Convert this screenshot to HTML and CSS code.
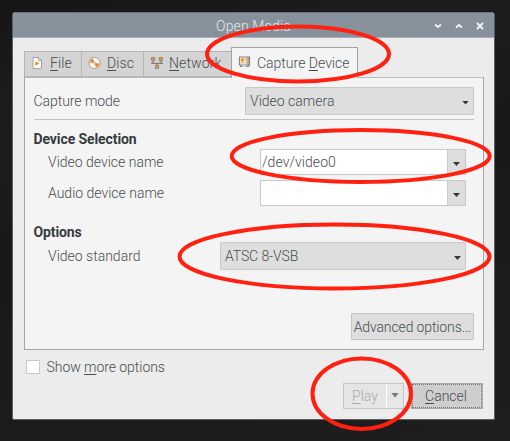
FILE: index.html
```html
<!DOCTYPE html>
<html lang="en">
<head>
<meta charset="utf-8">
<title>Open Media</title>
<link rel="stylesheet" href="styles.css">
</head>
<body>
<main class="window">
  <header class="titlebar">
    <span class="title">Open Media</span>
    <div class="controls">
      <svg width="8" height="8" viewBox="0 0 8 8"><path d="M1 2.500 4 5 7 2.500"/></svg>
      <svg width="8" height="8" viewBox="0 0 8 8"><path d="M1 5.500 4 3 7 5.500"/></svg>
      <svg width="8" height="8" viewBox="0 0 8 8"><path d="M1 1 7 7M7 1 1 7"/></svg>
    </div>
  </header>
  <nav class="tabs">
    <div class="tab tab-file">
      <svg width="14" height="14" viewBox="0 0 14 14"><path d="M2 1.500h5.500l3 3v8H2z" fill="#fafafa" stroke="#a4a4a4"/><path d="M7.500 1.500v3h3" fill="none" stroke="#a4a4a4"/><path d="M4.300 5.200v4.600l4-2.300z" fill="#f58a12"/></svg>
      <span><u>F</u>ile</span>
    </div>
    <div class="tab tab-disc">
      <svg width="14" height="14" viewBox="0 0 14 14"><circle cx="6.500" cy="7" r="5.600" fill="#f8f8f8" stroke="#a0a0a0"/><path d="M6.500 7 1.800 6.500 2.500 4 5 2.400zM6.500 7l4.700.5-.7 2.700L8 11.600z" fill="#f58a12"/><circle cx="6.500" cy="7" r="1.300" fill="#eee" stroke="#aaa" stroke-width=".8"/></svg>
      <span><u>D</u>isc</span>
    </div>
    <div class="tab tab-network">
      <svg width="14" height="14" viewBox="0 0 14 14"><path d="M3 4v3M11 4v3M1 7.300h12M7 7v3" fill="none" stroke="#808080" stroke-width="1.200"/><g fill="#f99a16" stroke="#858585" stroke-width=".9"><path d="M1.500 1.500h3.200v3.200H1.500zM9.300 1.500h3.200v3.200H9.300zM5.400 9.300h3.200v3.200H5.400z"/></g></svg>
      <span><u>N</u>etwork</span>
    </div>
    <div class="tab tab-capture active">
      <svg width="14" height="14" viewBox="0 0 14 14"><path d="M1.500 2h8.500v8H1.500zM10 3h1.500V1.200M11.500 3v7H10M2.500 10v1.500h2.200M7.500 11.500h3V10" fill="#f2eee8" stroke="#858585" stroke-width="1.200"/><circle cx="4.500" cy="5" r="1.700" fill="#f58a12"/><path d="M7 3.500h2v2H7zM6.500 7h2.500v1.300H6.500zM3 7.500h2.500v1H3z" fill="#f9b24e"/></svg>
      <span>Capture <u>D</u>evice</span>
    </div>
  </nav>
  <section class="panel">
    <div class="row mode">
      <span class="label label-mode">Capture mode</span>
      <div class="combo"><span class="text-camera">Video camera</span><i class="arrow"></i></div>
    </div>
    <h2 class="heading-device">Device Selection</h2>
    <div class="row field">
      <span class="label label-video">Video device name</span>
      <div class="entry"><span class="value">/dev/video0</span><span class="drop"><i class="arrow"></i></span></div>
    </div>
    <div class="row field">
      <span class="label label-audio">Audio device name</span>
      <div class="entry"><span class="value"></span><span class="drop"><i class="arrow"></i></span></div>
    </div>
    <h2 class="heading-options">Options</h2>
    <div class="row standard">
      <span class="label label-standard">Video standard</span>
      <div class="combo"><span class="text-atsc">ATSC 8-VSB</span><i class="arrow"></i></div>
    </div>
    <div class="advanced"><span>Advanced options...</span></div>
  </section>
  <div class="more"><span class="checkbox"></span><span class="more-text">Show <u>m</u>ore options</span></div>
  <footer class="actions">
    <div class="play"><span class="play-main"><span><u>P</u>lay</span></span><span class="play-drop"><i></i></span></div>
    <div class="cancel"><span><u>C</u>ancel</span></div>
  </footer>
</main>
<svg class="marks" width="510" height="441" viewBox="0 0 510 441">
  <ellipse cx="298" cy="54" rx="91" ry="27.500"/>
  <ellipse cx="360.700" cy="156" rx="129" ry="26"/>
  <ellipse cx="334.500" cy="256.500" rx="155" ry="32"/>
  <ellipse cx="361.700" cy="393.700" rx="49.200" ry="35.300"/>
</svg>
</body>
</html>
```
FILE: styles.css
```css
* { box-sizing: border-box; }
body {
  margin: 0;
  width: 510px;
  height: 441px;
  padding: 12px 0 0 12px;
  overflow: hidden;
  background: linear-gradient(165deg, #151515, #1d1d1d 20%, #191919 45%, #1e1e1e);
  font: 300 14px/18px Roboto, sans-serif;
  color: #484e50;
}
svg { display: block; flex: none; }
u {
  text-decoration: underline;
  text-decoration-thickness: 1px;
  text-underline-offset: 2px;
  text-decoration-skip-ink: none;
}
.window {
  width: 483px;
  height: 408px;
  background: #ececec;
  border: 1px solid #5c6062;
  border-top: 0;
  border-radius: 4px 4px 2px 2px;
  overflow: hidden;
}
.titlebar {
  height: 26px;
  background: #87919b;
  border-top: 1px solid #6e767d;
  border-bottom: 1px solid #a9afb4;
  display: flex;
  justify-content: flex-end;
  align-items: center;
  color: #e4e7ea;
}
.title { margin-right: 144px; width: 74px; white-space: nowrap; padding-top: 2px; letter-spacing: .15px; }
.controls { display: flex; gap: 13px; margin-right: 10px; padding-top: 2px; }
.controls path { fill: none; stroke: #f4f4f4; stroke-width: 1.9; }
.tabs { height: 39px; display: flex; align-items: flex-end; padding-left: 11px; }
.tab {
  height: 26px;
  background: #d4d4d4;
  border: 1px solid #b4b4b4;
  border-right: 0;
  display: flex;
  align-items: center;
  padding: 0 0 2px 6px;
  gap: 5px;
  white-space: nowrap;
}
.tab-file { width: 57px; }
.tab-disc { width: 62px; }
.tab-network { width: 88px; }
.tab.active {
  width: 127px;
  height: 31px;
  margin-bottom: -1px;
  padding-bottom: 0;
  background: #f4f4f4;
  border: 1px solid #a2a2a2;
  border-bottom: 0;
  position: relative;
}
.tab-file, .tab-disc, .tab-network { letter-spacing: .1px; }
.tab-capture svg { margin-top: -2px; }
.panel {
  width: 460px;
  height: 273px;
  margin-left: 11px;
  padding: 9px 9px 0 8.500px;
  background: #f4f4f4;
  border: 1px solid #a5a5a5;
  border-top: 1px solid #bcbcbc;
  display: flex;
  flex-direction: column;
}
.row { display: flex; justify-content: space-between; align-items: center; flex: none; }
.label { white-space: nowrap; }
.mode { height: 33px; padding-bottom: 5px; border-bottom: 1px solid #c2c2c2; }
.mode .combo { width: 229px; }
.label-mode { letter-spacing: -.05px; }
.combo {
  height: 28px;
  padding: 0 4px;
  border: 1px solid #c8c8c8;
  border-radius: 1px;
  background: #dedede;
  display: flex;
  justify-content: space-between;
  align-items: center;
}
.text-atsc { letter-spacing: -.1px; }
.arrow { width: 7px; height: 4px; margin-top: 4px; background: #34383a; clip-path: polygon(0 0, 100% 0, 50% 100%); }
h2 { margin: 0; font-size: 14px; line-height: 18px; font-weight: 700; letter-spacing: -.1px; flex: none; color: #353b3e; }
.heading-device { margin-top: 10px; }
.field { height: 26px; margin-bottom: 5px; padding: 0 8px 0 14.500px; }
.heading-device + .field { margin-top: 1px; }
.entry {
  width: 206px;
  height: 26px;
  border: 1px solid #c8c8c8;
  background: #fff;
  display: flex;
  justify-content: space-between;
}
.value { padding: 3px 0 0 1px; letter-spacing: .05px; }
.drop { width: 18px; background: #dedede; border-left: 1px solid #ccc; display: flex; align-items: center; justify-content: center; }
.heading-options { margin-top: 12px; }
.standard { height: 28px; margin-top: 1px; padding: 0 8px 0 14.500px; }
.standard .combo { width: 246px; }
.advanced {
  width: 123px;
  height: 27px;
  margin: 43px 0 0 auto;
  border: 1px solid #c4c4c4;
  border-radius: 1px;
  background: #dedede;
  display: flex;
  align-items: center;
  justify-content: center;
  letter-spacing: -.12px;
  white-space: nowrap;
}
.more { height: 33px; display: flex; align-items: center; padding-left: 13px; }
.checkbox { width: 14px; height: 14px; border: 1px solid #c8c8c8; border-radius: 1px; background: #fff; }
.more-text { margin-left: 6.500px; letter-spacing: -.05px; }
.actions { display: flex; justify-content: flex-end; gap: 7px; padding-right: 11px; }
.play { width: 61px; height: 26px; border: 1px solid #c6c6c6; display: flex; color: #a9a9a9; background: #e5e5e5; }
.play-main { width: 42px; display: flex; align-items: center; justify-content: center; }
.play-drop { flex: 1; border-left: 1px solid #fff; background: #e7e7e7; display: flex; align-items: center; justify-content: center; }
.play-drop i { width: 8px; height: 5px; margin-top: -2px; background: #777; clip-path: polygon(0 0, 100% 0, 50% 100%); }
.cancel {
  width: 72px;
  height: 26px;
  border: 1px solid #aaa;
  outline: 1px dotted #777;
  outline-offset: -2px;
  background: #cecece;
  display: flex;
  align-items: center;
  justify-content: center;
  padding-right: 2px;
}
.marks { position: absolute; left: 0; top: 0; }
.marks ellipse { fill: none; stroke: #ff2010; stroke-width: 4; }
```
